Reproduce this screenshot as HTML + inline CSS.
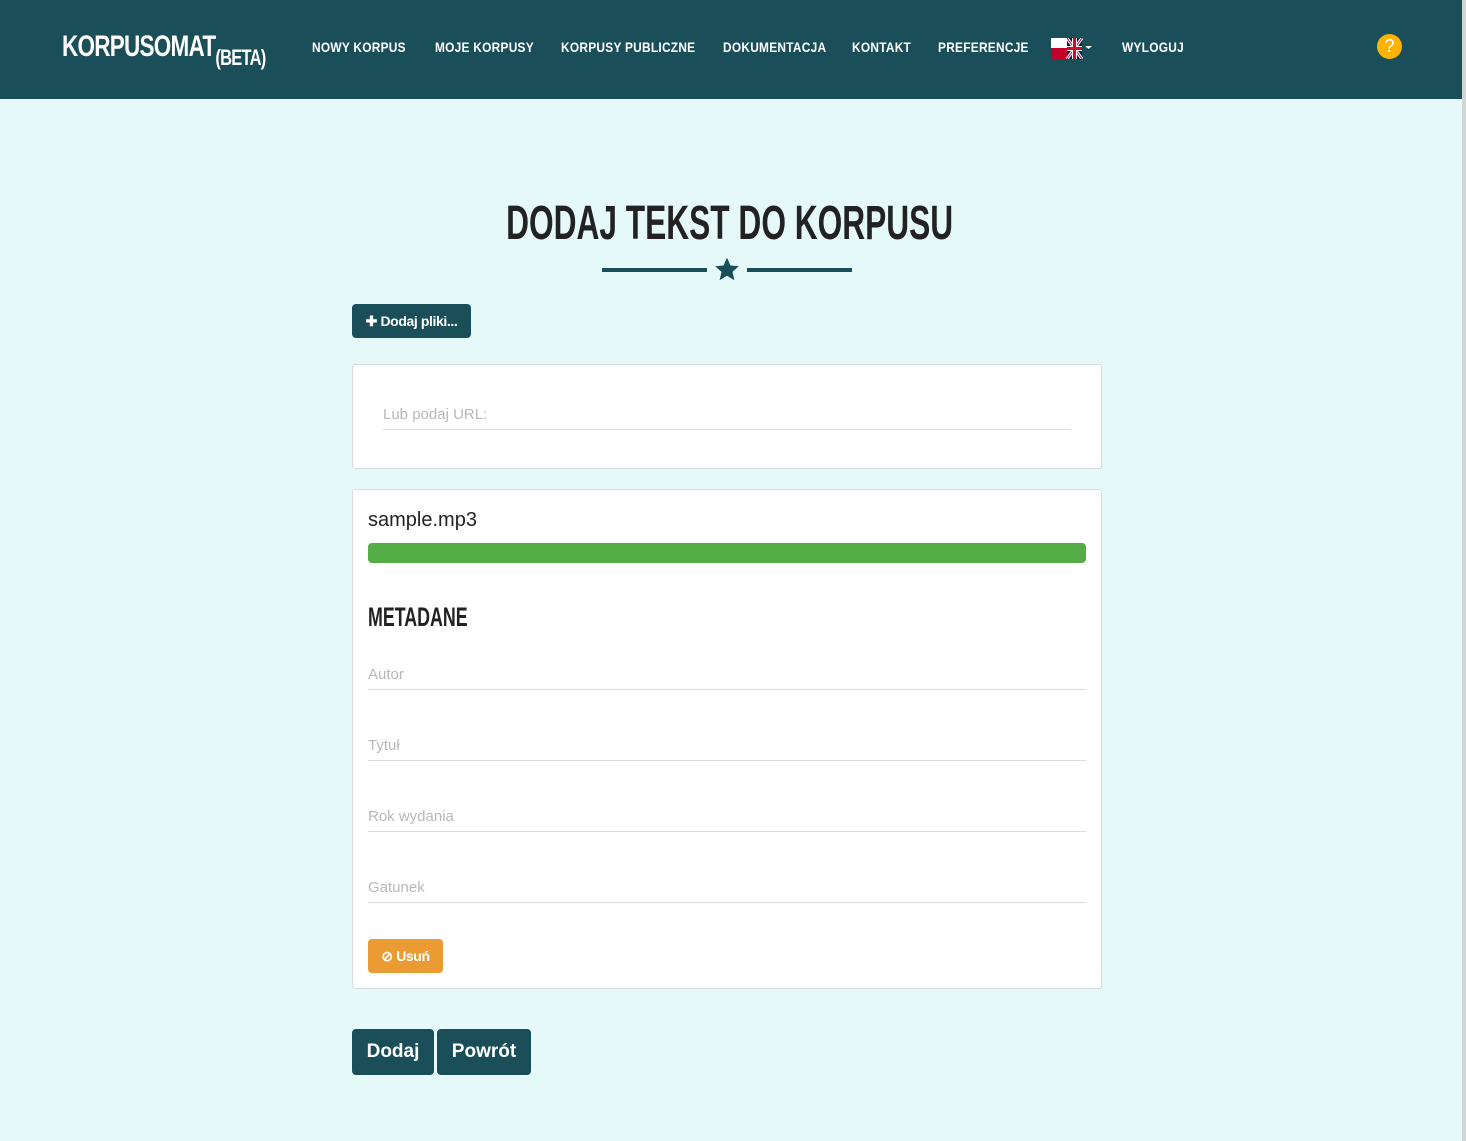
<!DOCTYPE html>
<html><head><meta charset="utf-8"><style>
*{box-sizing:border-box;margin:0;padding:0}
body{width:1466px;height:1141px;background:#e6f9f9;font-family:"Liberation Sans",sans-serif;position:relative;overflow:hidden}
.cond{font-family:"Liberation Sans Narrow","Liberation Sans",sans-serif;font-weight:bold}
.hdr{position:absolute;left:0;top:0;width:1462px;height:99px;background:#1a4f5a}
.sb{position:absolute;left:1462px;top:0;width:4px;height:1141px;background:#d0d6d6}
.logo{position:absolute;left:62px;top:30px;color:#fff;font-size:30px;letter-spacing:-1px;transform:scaleX(.75);transform-origin:left}
.logo small{font-size:22px;position:relative;top:9px}
.nav{position:absolute;top:39px;color:#fff;font-size:14px;letter-spacing:.3px;transform:scaleX(.85);transform-origin:left}
.help{position:absolute;left:1377px;top:34px;width:25px;height:25px;border-radius:50%;background:#fdb300;color:#fff;text-align:center;font-size:18px;line-height:25px}
h1{position:absolute;left:0;width:1462px;top:196px;text-align:center;font-size:48px;color:#222;transform:scaleX(.66);transform-origin:727px 0}
.line{position:absolute;top:268px;height:4px;width:105px;background:#1a4f5a}
.btn{position:absolute;background:#1a4f5a;color:#fff;border-radius:4px;font-weight:bold;text-align:center}
.panel{position:absolute;left:352px;width:750px;background:#fff;border:1px solid #d6dcdc;border-radius:3px}
.fld{position:absolute;color:#b8b8b8;font-size:15px;border-bottom:1px solid #dedede;padding-bottom:6px}
</style></head><body>
<div class="hdr"></div><div class="sb"></div>
<div class="logo cond">KORPUSOMAT<small>(BETA)</small></div>
<div class="nav cond" style="left:312px">NOWY KORPUS</div>
<div class="nav cond" style="left:435px">MOJE KORPUSY</div>
<div class="nav cond" style="left:561px">KORPUSY PUBLICZNE</div>
<div class="nav cond" style="left:723px">DOKUMENTACJA</div>
<div class="nav cond" style="left:852px">KONTAKT</div>
<div class="nav cond" style="left:938px">PREFERENCJE</div>
<svg style="position:absolute;left:1051px;top:38px" width="42" height="21" viewBox="0 0 42 21">
<rect x="0" y="0" width="16" height="10" fill="#fff"/><rect x="0" y="10" width="16" height="11" fill="#c0002a"/>
<rect x="16" y="0" width="15" height="21" fill="#012169"/>
<path d="M16 0L31 21M31 0L16 21" stroke="#fff" stroke-width="3"/>
<path d="M16 0L31 21M31 0L16 21" stroke="#c8102e" stroke-width="1"/>
<rect x="16" y="8" width="15" height="5" fill="#fff"/><rect x="21" y="0" width="5" height="21" fill="#fff"/>
<rect x="16" y="9" width="15" height="3" fill="#c8102e"/><rect x="22" y="0" width="3" height="21" fill="#c8102e"/>
<path d="M34 8h7l-3.5 3z" fill="#fff"/></svg>
<div class="nav cond" style="left:1122px">WYLOGUJ</div>
<div class="help">?</div>
<h1 class="cond">DODAJ TEKST DO KORPUSU</h1>
<div class="line" style="left:602px"></div><div class="line" style="left:747px"></div>
<svg style="position:absolute;left:713px;top:256px" width="28" height="27" viewBox="0 0 24 24"><path d="M12 1.5l3.1 6.9 7.4.7-5.6 5 1.7 7.4L12 17.6l-6.6 3.9 1.7-7.4-5.6-5 7.4-.7z" fill="#1a4f5a"/></svg>
<div class="btn" style="left:352px;top:304px;width:119px;height:34px;line-height:34px;font-size:14px;letter-spacing:-.4px">✚ Dodaj pliki...</div>
<div class="panel" style="top:364px;height:105px"></div>
<div class="fld" style="left:383px;top:406px;width:688px">Lub podaj URL:</div>
<div class="panel" style="top:489px;height:500px"></div>
<div style="position:absolute;left:368px;top:509px;font-size:20px;color:#222">sample.mp3</div>
<div style="position:absolute;left:368px;top:543px;width:718px;height:20px;background:#55ad46;border-radius:4px"></div>
<div class="cond" style="position:absolute;left:368px;top:602px;font-size:27px;color:#222;transform:scaleX(.66);transform-origin:left">METADANE</div>
<div class="fld" style="left:368px;top:666px;width:718px">Autor</div>
<div class="fld" style="left:368px;top:737px;width:718px">Tytuł</div>
<div class="fld" style="left:368px;top:808px;width:718px">Rok wydania</div>
<div class="fld" style="left:368px;top:879px;width:718px">Gatunek</div>
<div class="btn" style="left:368px;top:939px;width:75px;height:34px;line-height:34px;font-size:14px;background:#eb9b34;letter-spacing:-.4px">⊘ Usuń</div>
<div class="btn" style="left:352px;top:1029px;width:82px;height:46px;line-height:46px;font-size:19px">Dodaj</div>
<div class="btn" style="left:437px;top:1029px;width:94px;height:46px;line-height:46px;font-size:19px">Powrót</div>
</body></html>
